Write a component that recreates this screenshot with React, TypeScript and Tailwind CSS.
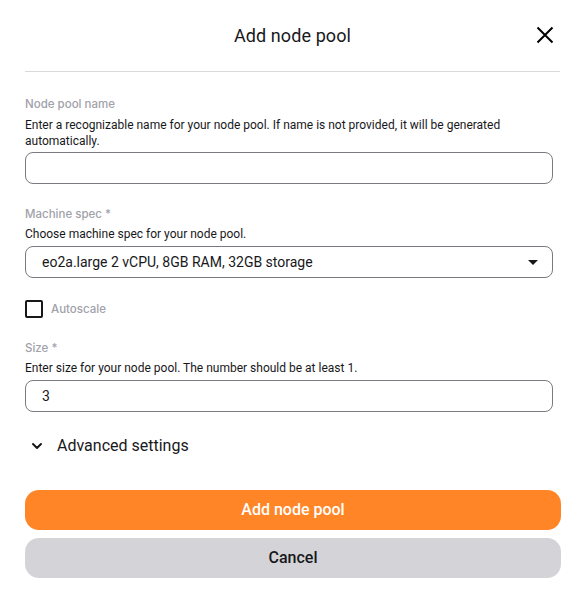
import React, { useState } from 'react';
import { ChevronDown } from 'lucide-react';

const labelCls = "font-['Inter',sans-serif] text-[11.5px] leading-[16px] font-medium text-[#a1a1aa]";
const hintCls = "text-[12px] leading-[16px] text-[#18181b]";
const inputCls =
  'block w-[528px] h-[32px] rounded-[8px] border border-[#7a7a80] px-4 text-[14px] text-[#18181b] outline-none bg-white';

const App: React.FC = () => {
  const [name, setName] = useState('');
  const [size, setSize] = useState('3');
  const [autoscale, setAutoscale] = useState(false);

  return (
    <div className="w-[585px] h-[602px] bg-white font-['Roboto',sans-serif] text-[#18181b]">
      {/* Header */}
      <div className="relative h-[72px] mx-[25px] border-b border-[#d9d9dc] flex items-center justify-center">
        <h2 className="text-[18px] leading-[24px] tracking-[0.1px]">Add node pool</h2>
        <button className="absolute right-[6px] top-[26px] text-black">
          <svg width="18" height="18" viewBox="0 0 18 18" fill="none" stroke="currentColor" strokeWidth="2">
            <path d="M1.5 1.5l15 15M16.5 1.5l-15 15" />
          </svg>
        </button>
      </div>

      <div className="px-[25px] pt-[24px]">
        {/* Name */}
        <div className={labelCls}>Node pool name</div>
        <p className={`${hintCls} mt-[5px] pr-[40px]`}>
          Enter a recognizable name for your node pool. If name is not provided, it will be generated automatically.
        </p>
        <input
          className={`${inputCls} mt-[3px]`}
          value={name}
          onChange={e => setName(e.target.value)}
        />

        {/* Machine spec */}
        <div className={`${labelCls} mt-[22px]`}>Machine spec *</div>
        <p className={`${hintCls} mt-[4px]`}>Choose machine spec for your node pool.</p>
        <div className={`${inputCls} mt-[4px] flex items-center justify-between pr-[14px]`}>
          <span>eo2a.large 2 vCPU, 8GB RAM, 32GB storage</span>
          <svg width="10" height="5" viewBox="0 0 10 5">
            <path d="M0 0h10L5 5z" fill="#18181b" />
          </svg>
        </div>

        {/* Autoscale */}
        <label className="mt-[22px] flex items-center gap-[8px] cursor-pointer">
          <span
            onClick={() => setAutoscale(!autoscale)}
            className="w-[18px] h-[18px] rounded-[2px] border-2 border-[#18181b] bg-white"
          />
          <span className={labelCls}>Autoscale</span>
        </label>

        {/* Size */}
        <div className={`${labelCls} mt-[22px]`}>Size *</div>
        <p className={`${hintCls} mt-[4px]`}>Enter size for your node pool. The number should be at least 1.</p>
        <input
          className={`${inputCls} mt-[4px]`}
          value={size}
          onChange={e => setSize(e.target.value)}
        />

        {/* Advanced */}
        <button className="mt-[22px] flex items-center gap-[12px] pl-[4px]">
          <ChevronDown size={16} strokeWidth={3} />
          <span className="text-[16px] leading-[24px]">Advanced settings</span>
        </button>

        {/* Actions */}
        <div className="mt-[32px] flex flex-col gap-[8px]">
          <button className="w-[536px] h-[40px] rounded-[14px] bg-[#ff8527] text-white text-[16px] font-medium">
            Add node pool
          </button>
          <button className="w-[536px] h-[40px] rounded-[14px] bg-[#d4d4d8] text-[#18181b] text-[16px] font-medium">
            Cancel
          </button>
        </div>
      </div>
    </div>
  );
};

export default App;
